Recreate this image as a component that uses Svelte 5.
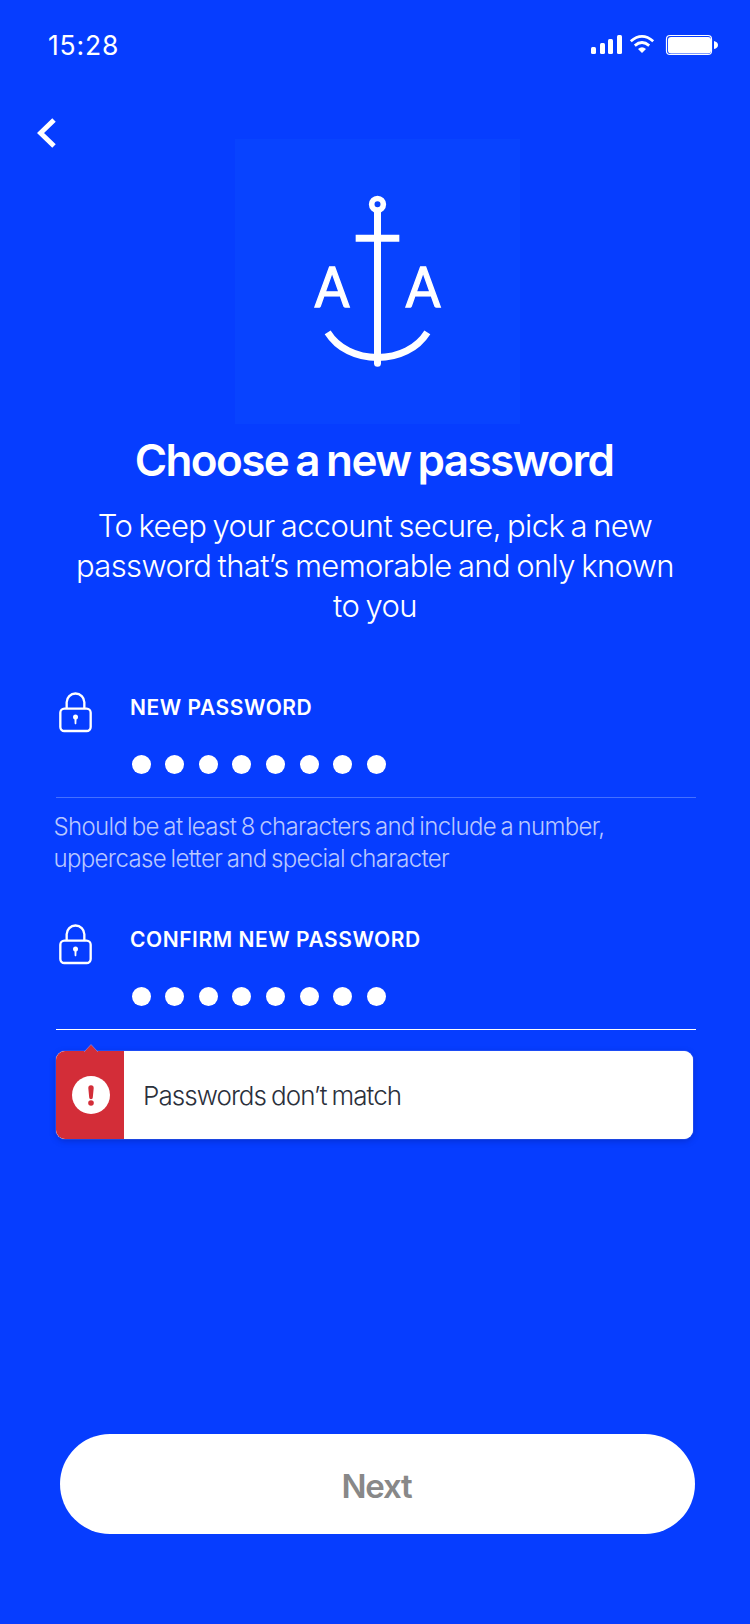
<script>
  const dots = Array.from({ length: 8 });
</script>

{#snippet lock()}
  <svg class="lock" viewBox="54 35 105 123" aria-hidden="true">
    <rect x="61" y="85" width="91" height="67" rx="12" fill="none" stroke="#fff" stroke-width="7" />
    <path d="M80 84V66a26.500 26.500 0 0 1 53 0V84" fill="none" stroke="#fff" stroke-width="7" />
    <path d="M103 108h7l-1 22a3 3 0 0 1-5 0z" fill="#fff" />
    <circle cx="106.500" cy="110" r="7.500" fill="#fff" />
  </svg>
{/snippet}

{#snippet field(label, active)}
  <div class="field" class:active>
    {@render lock()}
    <div class="entry">
      <div class="label">{label}</div>
      <div class="dots">{#each dots as _}<i></i>{/each}</div>
    </div>
  </div>
{/snippet}

<main>
  <header>
    <span class="time">15:28</span>
    <svg class="status" viewBox="0 0 130 24" aria-hidden="true">
      <g fill="#fff">
        <rect x="1" y="14" width="5" height="7" rx="1.500" />
        <rect x="10" y="10" width="5" height="11" rx="1.500" />
        <rect x="18" y="6" width="5" height="15" rx="1.500" />
        <rect x="27" y="2" width="5" height="19" rx="1.500" />
        <path d="M52 20l-4-4q4-3.500 8 0z" />
        <rect x="78" y="4" width="43" height="16.500" rx="3" />
        <path d="M124 8q4 1 4 4t-4 4z" />
      </g>
      <g fill="none" stroke="#fff">
        <path d="M40.800 8.200Q52 -1.500 63.200 8.200M44.800 12.600Q52 6.500 59.200 12.600" stroke-width="2.800" />
        <rect x="76.500" y="2.500" width="45" height="19" rx="3.500" stroke-width="1.200" />
      </g>
    </svg>
  </header>

  <button class="back" aria-label="Back">
    <svg viewBox="0 0 20 30"><path d="M17 2L3.500 15L17 28" fill="none" stroke="#fff" stroke-width="5" /></svg>
  </button>

  <svg class="logo" viewBox="30 27 855 855" aria-hidden="true">
    <g fill="none" stroke="#fff" stroke-width="21">
      <circle cx="457.500" cy="223" r="17.500" stroke-width="17" />
      <path d="M457.500 245V690M392 324.500H523M308 607C338 655 394 682.500 457.500 682.500S577 655 607 607" />
      <path d="M457.500 680V700" stroke-linecap="round" />
    </g>
    <g fill="#fff" stroke="#fff" stroke-width="4" font-family="Lato, sans-serif" font-size="171" text-anchor="middle">
      <text transform="translate(321 531) scale(.9 1)">A</text>
      <text transform="translate(594 531) scale(.9 1)">A</text>
    </g>
  </svg>

  <h1>Choose a new password</h1>
  <p class="lead">To keep your account secure, pick a new<br />password that’s memorable and only known<br />to you</p>

  <section>
    {@render field('NEW PASSWORD', false)}
    <p class="hint">Should be at least 8 characters and include a number,<br />uppercase letter and special character</p>
    {@render field('CONFIRM NEW PASSWORD', true)}
    <div class="error" role="alert">
      <div class="mark">
        <svg class="tip" viewBox="0 0 14 8"><path d="M0 8L7 .5L14 8" fill="#d32d38" stroke="#8a96f5" stroke-width=".6" /></svg>
        <svg class="bang" viewBox="0 0 38 38"><circle cx="19" cy="19" r="19" fill="#fff" /><path d="M16.300 12a2.700 2.700 0 0 1 5.400 0l-.9 9.500a1.800 1.800 0 0 1-3.600 0z" fill="#d32d38" /><circle cx="19" cy="27" r="2.800" fill="#d32d38" /></svg>
      </div>
      <span class="msg">Passwords don’t match</span>
    </div>
  </section>

  <button class="next">Next</button>
</main>

<style>
  :global(body) { margin: 0; background: #063dff; }
  main {
    box-sizing: border-box; width: 750px; height: 1624px; overflow: hidden;
    display: flex; flex-direction: column; background: #063dff; color: #fff;
    font-family: Inter, "Liberation Sans", sans-serif;
  }
  button { border: 0; padding: 0; font: inherit; background: none; }
  header { display: flex; justify-content: space-between; align-items: flex-start; height: 85px; padding: 33px 30px 0 48px; box-sizing: border-box; flex: none; }
  .time { font-size: 26.500px; line-height: 24px; letter-spacing: .8px; }
  .status { width: 130px; height: 24px; }
  .back { width: 20px; height: 30px; margin: 33px 0 0 37px; flex: none; }
  .back svg { display: block; width: 20px; height: 30px; }
  .logo { display: block; flex: none; width: 285px; height: 285px; margin: -9px 0 0 235px; background: #0843ff; }
  h1 { margin: 10px 2px 0 0; height: 52px; text-align: center; font-size: 44px; line-height: 52px; font-weight: 600; letter-spacing: -1.600px; word-spacing: -2.400px; white-space: nowrap; }
  .lead { margin: 20px 0 0; height: 120px; text-align: center; font-size: 31px; line-height: 40.200px; font-weight: 300; letter-spacing: -.65px; word-spacing: -1.700px; white-space: nowrap; }
  section { margin: 66px 54.500px 0 55.500px; display: flex; flex-direction: column; }
  .field { display: flex; height: 106px; border-bottom: 1px solid #4470ff; box-sizing: border-box; }
  .field.active { border-color: #fff; }
  .lock { width: 35px; height: 41px; margin-left: 2.500px; flex: none; }
  .entry { margin-left: 37px; }
  .label { font-size: 21px; line-height: 26px; font-weight: 600; letter-spacing: .55px; margin-top: 3px; white-space: nowrap; }
  .dots { display: flex; gap: 14.570px; margin: 34px 0 0 1.700px; }
  .dots i { width: 19px; height: 19px; border-radius: 50%; background: #fff; }
  .hint { margin: 13px 0 0 -2px; height: 113px; font-size: 24px; line-height: 32px; font-weight: 300; letter-spacing: -.65px; word-spacing: -1.600px; color: #b8c7ff; white-space: nowrap; }
  .error { margin: 21px 0 0; width: 637px; height: 88px; display: flex; align-items: center; background: #fff; border-radius: 9px; color: #2b303b; box-shadow: 0 0 1px #fff, 0 2px 6px rgba(0, 20, 120, .35); }
  .mark { position: relative; width: 68.500px; height: 88px; border-radius: 9px 0 0 9px; background: #d32d38; display: grid; place-items: center; }
  .tip { position: absolute; left: 28.500px; top: -7px; width: 14px; height: 8px; }
  .bang { width: 38px; height: 38px; margin: -1px 0 0 3px; }
  .msg { margin: 2px 0 0 19px; font-size: 26px; line-height: 36px; font-weight: 300; letter-spacing: -.95px; word-spacing: -1.300px; }
  .next { box-sizing: border-box; width: 635px; height: 100px; margin: auto 0 90px 60px; padding: 4px 2px 0 0; border-radius: 50px; background: #fff; color: #888; font-size: 33px; font-weight: 600; letter-spacing: -1.200px; flex: none; }
</style>
